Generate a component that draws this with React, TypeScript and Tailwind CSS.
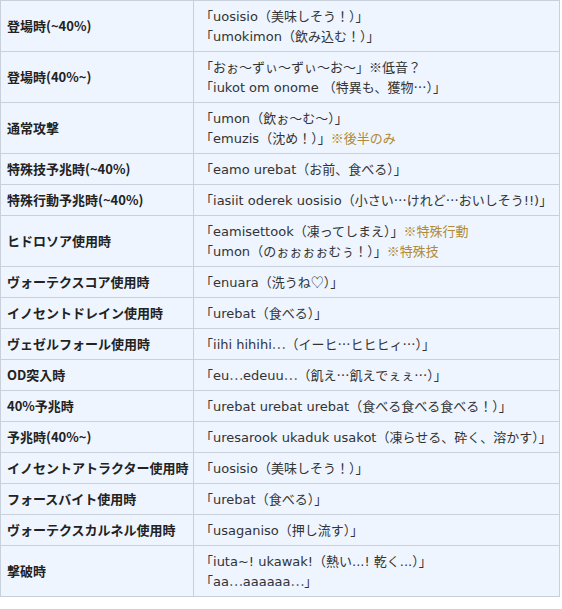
import React from "react";

type Line = { t: string; note?: string };
type Row = { k: string; lines: Line[] };

const rows: Row[] = [
  { k: "登場時(~40%)", lines: [{ t: "「uosisio（美味しそう！）」" }, { t: "「umokimon（飲み込む！）」" }] },
  { k: "登場時(40%~)", lines: [{ t: "「おぉ～ずぃ～ずぃ～お～」※低音？" }, { t: "「iukot om onome （特異も、獲物…）」" }] },
  { k: "通常攻撃", lines: [{ t: "「umon（飲ぉ～む～）」" }, { t: "「emuzis（沈め！）」", note: "※後半のみ" }] },
  { k: "特殊技予兆時(~40%)", lines: [{ t: "「eamo urebat（お前、食べる）」" }] },
  { k: "特殊行動予兆時(~40%)", lines: [{ t: "「iasiit oderek uosisio（小さい…けれど…おいしそう!!)」" }] },
  { k: "ヒドロソア使用時", lines: [{ t: "「eamisettook（凍ってしまえ）」", note: "※特殊行動" }, { t: "「umon（のぉぉぉぉむぅ！）」", note: "※特殊技" }] },
  { k: "ヴォーテクスコア使用時", lines: [{ t: "「enuara（洗うね♡）」" }] },
  { k: "イノセントドレイン使用時", lines: [{ t: "「urebat（食べる）」" }] },
  { k: "ヴェゼルフォール使用時", lines: [{ t: "「iihi hihihi…（イーヒ…ヒヒヒィ…）」" }] },
  { k: "OD突入時", lines: [{ t: "「eu…edeuu…（飢え…飢えでぇぇ…）」" }] },
  { k: "40%予兆時", lines: [{ t: "「urebat urebat urebat（食べる食べる食べる！）」" }] },
  { k: "予兆時(40%~)", lines: [{ t: "「uresarook ukaduk usakot（凍らせる、砕く、溶かす）」" }] },
  { k: "イノセントアトラクター使用時", lines: [{ t: "「uosisio（美味しそう！）」" }] },
  { k: "フォースバイト使用時", lines: [{ t: "「urebat（食べる）」" }] },
  { k: "ヴォーテクスカルネル使用時", lines: [{ t: "「usaganiso（押し流す）」" }] },
  { k: "撃破時", lines: [{ t: "「iuta~! ukawak!（熱い...! 乾く...）」" }, { t: "「aa…aaaaaa…」" }] },
];

const cjk = '"Noto Sans CJK JP", sans-serif';
const latin = '"DejaVu Sans", "Noto Sans CJK JP", sans-serif';

function Txt({ s }: { s: string }) {
  const parts = s.split(/([\x20-\x7E]+)/);
  return (
    <>
      {parts.map((p, i) =>
        p === "" ? null : /^[\x20-\x7E]+$/.test(p) ? (
          <span key={i} style={{ fontFamily: latin }}>
            {p}
          </span>
        ) : (
          <span key={i} style={{ fontFamily: cjk, fontFeatureSettings: '"fwid"' }}>
            {p}
          </span>
        )
      )}
    </>
  );
}

export default function App() {
  return (
    <div className="w-[562px] h-[609px] bg-white" style={{ fontFamily: cjk }}>
      <table className="w-[560px] table-fixed border-collapse border border-[#c8d0dc] text-[13px] leading-[20px] text-[#333]">
        <colgroup>
          <col className="w-[193px]" />
          <col />
        </colgroup>
        <tbody>
          {rows.map((r, i) => (
            <tr key={i} className="bg-[#eef5ff]">
              <td className="border border-[#c8d0dc] px-[6px] py-[5px] align-middle font-bold text-[#222] whitespace-nowrap">
                {r.k}
              </td>
              <td className="border border-[#c8d0dc] px-[6px] py-[5px] align-middle whitespace-nowrap">
                {r.lines.map((l, j) => (
                  <div key={j} className="h-[20px]">
                    <Txt s={l.t} />
                    {l.note && <span className="text-[#b08a35]">{l.note}</span>}
                  </div>
                ))}
              </td>
            </tr>
          ))}
        </tbody>
      </table>
    </div>
  );
}
